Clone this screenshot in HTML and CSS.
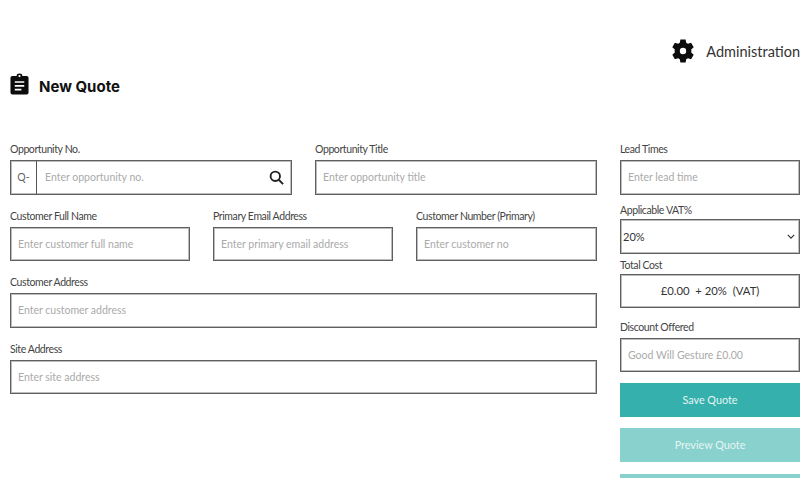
FILE: index.html
```html
<!DOCTYPE html>
<html lang="en">
<head>
<meta charset="utf-8">
<title>New Quote</title>
<link rel="stylesheet" href="styles.css">
</head>
<body>
<header class="topbar">
  <svg class="gear" viewBox="0 0 24 24" aria-hidden="true"><path fill-rule="evenodd" d="M14.600 .6h-5.200l-.6 3.200a8.300 8.300 0 0 0-1.700 1L3.900 3.700 1.300 8.300l2.500 2.100a8 8 0 0 0 0 3.200l-2.500 2.100 2.600 4.600 3.200-1.100a8.300 8.300 0 0 0 1.700 1l.6 3.200h5.200l.6-3.200a8.300 8.300 0 0 0 1.700-1l3.200 1.100 2.600-4.600-2.500-2.100a8 8 0 0 0 0-3.200l2.500-2.100-2.600-4.600-3.200 1.100a8.300 8.300 0 0 0-1.700-1zM12 8.800a3.200 3.200 0 1 1 0 6.400 3.200 3.200 0 0 1 0-6.400z"/></svg>
  <span class="admin">Administration</span>
</header>
<h1 class="title">
  <svg class="clip" viewBox="0 0 20 22" aria-hidden="true"><path fill-rule="evenodd" d="M7 2.500a3 2.500 0 0 1 6 0h4.500A2 2 0 0 1 19.500 4.500v15.500a2 2 0 0 1-2 2h-15a2 2 0 0 1-2-2V4.500a2 2 0 0 1 2-2zM10 1.500a1.200 1.200 0 1 0 0 2.400 1.200 1.200 0 0 0 0-2.400zM5 8v1.800h10V8zM5 12v1.800h10V12zM5 16v1.800h7V16z"/></svg>
  New Quote
</h1>
<main class="layout">
  <section class="left">
    <div class="row two">
      <div class="field">
        <label class="lbl">Opportunity No.</label>
        <div class="box group">
          <span class="prefix">Q-</span>
          <input class="inp" placeholder="Enter opportunity no.">
          <svg class="search" viewBox="0 0 16 16" aria-hidden="true"><circle cx="6.700" cy="6.700" r="5"/><path d="M10.400 10.400 15 15"/></svg>
        </div>
      </div>
      <div class="field">
        <label class="lbl">Opportunity Title</label>
        <input class="box inp" placeholder="Enter opportunity title">
      </div>
    </div>
    <div class="row three">
      <div class="field">
        <label class="lbl">Customer Full Name</label>
        <input class="box inp" placeholder="Enter customer full name">
      </div>
      <div class="field">
        <label class="lbl">Primary Email Address</label>
        <input class="box inp" placeholder="Enter primary email address">
      </div>
      <div class="field">
        <label class="lbl">Customer Number (Primary)</label>
        <input class="box inp" placeholder="Enter customer no">
      </div>
    </div>
    <div class="field">
      <label class="lbl">Customer Address</label>
      <input class="box inp" placeholder="Enter customer address">
    </div>
    <div class="field">
      <label class="lbl">Site Address</label>
      <input class="box inp" placeholder="Enter site address">
    </div>
  </section>
  <aside class="right">
    <div class="field">
      <label class="lbl">Lead Times</label>
      <input class="box inp" placeholder="Enter lead time">
    </div>
    <div class="field vat">
      <label class="lbl">Applicable VAT%</label>
      <div class="box select">
        <span>20%</span>
        <svg class="chev" viewBox="0 0 10 6" aria-hidden="true"><path d="M1 1l4 4 4-4"/></svg>
      </div>
    </div>
    <div class="field total">
      <label class="lbl">Total Cost</label>
      <div class="box cost">£0.00 &nbsp;+ 20% &nbsp;(VAT)</div>
    </div>
    <div class="field discount">
      <label class="lbl">Discount Offered</label>
      <input class="box inp" placeholder="Good Will Gesture £0.00">
    </div>
    <button class="btn save">Save Quote</button>
    <button class="btn preview">Preview Quote</button>
    <button class="btn third"></button>
  </aside>
</main>
</body>
</html>
```
FILE: styles.css
```css
* { box-sizing: border-box; }
html, body { height: 480px; overflow: hidden; }
body {
  margin: 0;
  background: #fff;
  font-family: Lato, "Liberation Sans", sans-serif;
  color: #333;
}
.topbar {
  display: flex;
  justify-content: flex-end;
  align-items: center;
  gap: 11px;
  height: 26px;
  margin-top: 38px;
}
.gear { width: 24px; height: 24px; fill: #0c0c0c; }
.admin { font-size: 14.500px; color: #333; }
.title {
  display: flex;
  align-items: center;
  gap: 10px;
  margin: 10px 0 0 10px;
  height: 24px;
  font-size: 15px;
  font-weight: 700;
  font-family: Inter, sans-serif;
  color: #111;
}
.clip { width: 19px; height: 22px; margin-bottom: 4px; fill: #0c0c0c; }
.layout {
  display: grid;
  grid-template-columns: 587px 180px;
  column-gap: 23px;
  margin: 45px 0 0 10px;
}
.left { display: flex; flex-direction: column; gap: 15px; }
.row { display: grid; column-gap: 23px; }
.two { grid-template-columns: 282px 282px; }
.three { grid-template-columns: 180px 180px 181px; }
.field { display: flex; flex-direction: column; }
.lbl {
  font-size: 10.500px;
  letter-spacing: -0.400px;
  line-height: 12px;
  height: 12px;
  margin-bottom: 5px;
  color: #444;
}
.box {
  width: 100%;
  height: 34.500px;
  border: 1px solid #5f5f5f;
  box-shadow: inset 0 0 0 1px #bcbcbc;
  border-radius: 0;
  background: #fff;
  outline: none;
}
.inp {
  font-family: inherit;
  font-size: 10.500px;
  padding: 0 7px;
  color: #333;
}
.inp::placeholder { color: #aaa; opacity: 1; }
.group { display: flex; align-items: center; }
.prefix {
  flex: none;
  width: 26px;
  height: 100%;
  display: flex;
  align-items: center;
  justify-content: center;
  border-right: 1px solid #555;
  font-size: 10.500px;
  color: #666;
}
.group .inp { flex: 1; min-width: 0; border: 0; height: 100%; padding-left: 8px; background: none; outline: none; }
.search { flex: none; width: 15px; height: 15px; margin-right: 7px; fill: none; stroke: #222; stroke-width: 2; }
.right { display: flex; flex-direction: column; }
.select {
  display: flex;
  align-items: center;
  justify-content: space-between;
  padding: 0 4px 0 2px;
  font-size: 11px;
  color: #333;
}
.chev { width: 8px; height: 5px; fill: none; stroke: #333; stroke-width: 1.500; }
.vat { margin-top: 9.500px; }
.vat .lbl, .total .lbl { margin-bottom: 3px; }
.total { margin-top: 5px; }
.discount { margin-top: 13px; }
.discount .lbl { margin-bottom: 4.500px; }
.cost {
  display: flex;
  align-items: center;
  justify-content: center;
  font-size: 11.300px;
  color: #333;
}
.btn {
  width: 100%;
  flex: none;
  height: 34px;
  border: 0;
  padding: 0 0 2px;
  font-family: inherit;
  font-size: 10.800px;
  color: #e6f5f4;
  margin-top: 11px;
}
.save { background: #35b0ad; }
.preview { background: #88d1cd; }
.third { background: #88d1cd; height: 4px; padding: 0; margin-top: 12px; }
```
